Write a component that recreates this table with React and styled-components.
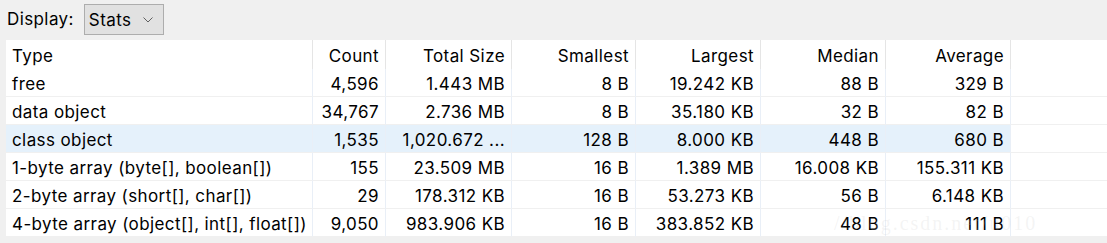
import styled, { createGlobalStyle } from 'styled-components'

const GlobalStyle = createGlobalStyle`
	html, body { margin: 0; padding: 0; background: #f0f0f0; }
	body {
		font-family: Inter, "Noto Sans CJK SC", sans-serif;
		letter-spacing: 0.4px;
		color: #000;
	}
`

const columns = [
	{ key: 'type', label: 'Type', align: 'left' },
	{ key: 'count', label: 'Count' },
	{ key: 'total', label: 'Total Size' },
	{ key: 'smallest', label: 'Smallest' },
	{ key: 'largest', label: 'Largest' },
	{ key: 'median', label: 'Median' },
	{ key: 'average', label: 'Average' }
]

const rows = [
	['free', '4,596', '1.443 MB', '8 B', '19.242 KB', '88 B', '329 B'],
	['data object', '34,767', '2.736 MB', '8 B', '35.180 KB', '32 B', '82 B'],
	['class object', '1,535', '1,020.672 ...', '128 B', '8.000 KB', '448 B', '680 B'],
	['1-byte array (byte[], boolean[])', '155', '23.509 MB', '16 B', '1.389 MB', '16.008 KB', '155.311 KB'],
	['2-byte array (short[], char[])', '29', '178.312 KB', '16 B', '53.273 KB', '56 B', '6.148 KB'],
	['4-byte array (object[], int[], float[])', '9,050', '983.906 KB', '16 B', '383.852 KB', '48 B', '111 B']
]

export default function App () {
	return (
		<Page>
			<GlobalStyle />
			<Toolbar>
				<Label>Display:</Label>
				<Combo>
					<span>Stats</span>
					<svg width='10' height='6' viewBox='0 0 10 6'>
						<path d='M0.5 0.5 L5 5 L9.5 0.5' fill='none' stroke='#606060' strokeWidth='1' />
					</svg>
				</Combo>
			</Toolbar>
			<Grid>
				{columns.map(c =>
					<HeadCell key={c.key} $align={c.align}>{c.label}</HeadCell>
				)}
				<HeadCell $filler />
				{rows.map((row, i) =>
					<Row key={row[0]} $selected={i === 2}>
						{row.map((v, j) =>
							<Cell key={j} $align={j === 0 ? 'left' : 'right'}>{v}</Cell>
						)}
						<Cell $filler />
					</Row>
				)}
				<Watermark>//blog.csdn.net/u010</Watermark>
			</Grid>
		</Page>
	)
}

const Page = styled.div`
	width: 1107px;
	height: 243px;
	background: #f0f0f0;
	overflow: hidden;
`

const Toolbar = styled.div`
	display: flex;
	align-items: center;
	gap: 10px;
	height: 37px;
	padding-left: 7px;
	font-size: 17px;
`

const Label = styled.span`
	line-height: 1;
	padding-top: 1px;
`

const Combo = styled.div`
	box-sizing: border-box;
	width: 80px;
	height: 31px;
	margin-top: 1px;
	display: flex;
	align-items: center;
	justify-content: space-between;
	padding: 1px 10px 0 4px;
	background: #e1e1e1;
	border: 1px solid #adadad;
`

const Grid = styled.div`
	position: relative;
	margin: 3px 0 0 6px;
	display: grid;
	grid-template-columns: 307px 73px 126px 124px 125px 125px 125px 1fr;
	background: #fff;
	font-size: 17px;
`

const HeadCell = styled.div`
	box-sizing: border-box;
	height: 29px;
	padding: 2px 6px 0;
	display: flex;
	align-items: center;
	justify-content: ${p => p.$align === 'left' ? 'flex-start' : 'flex-end'};
	border-right: ${p => p.$filler ? 'none' : '1px solid #e5e5e5'};
	white-space: nowrap;
`

const Row = styled.div`
	display: contents;
	& > div {
		background: ${p => p.$selected ? '#e5f1fb' : '#fff'};
	}
	& > div:last-child {
		background: #fff;
	}
`

const Cell = styled.div`
	box-sizing: border-box;
	height: 28px;
	padding: 2px 6px 0;
	display: flex;
	align-items: center;
	justify-content: ${p => p.$align === 'left' ? 'flex-start' : 'flex-end'};
	border-right: ${p => p.$filler ? 'none' : '1px solid #e9eff7'};
	border-bottom: 1px solid #f0f0f0;
	white-space: nowrap;
	overflow: hidden;
`

const Watermark = styled.div`
	position: absolute;
	left: 828px;
	top: 172px;
	font-family: "Liberation Serif", serif;
	font-size: 20px;
	letter-spacing: 2px;
	color: rgba(200, 200, 200, 0.2);
	pointer-events: none;
`
